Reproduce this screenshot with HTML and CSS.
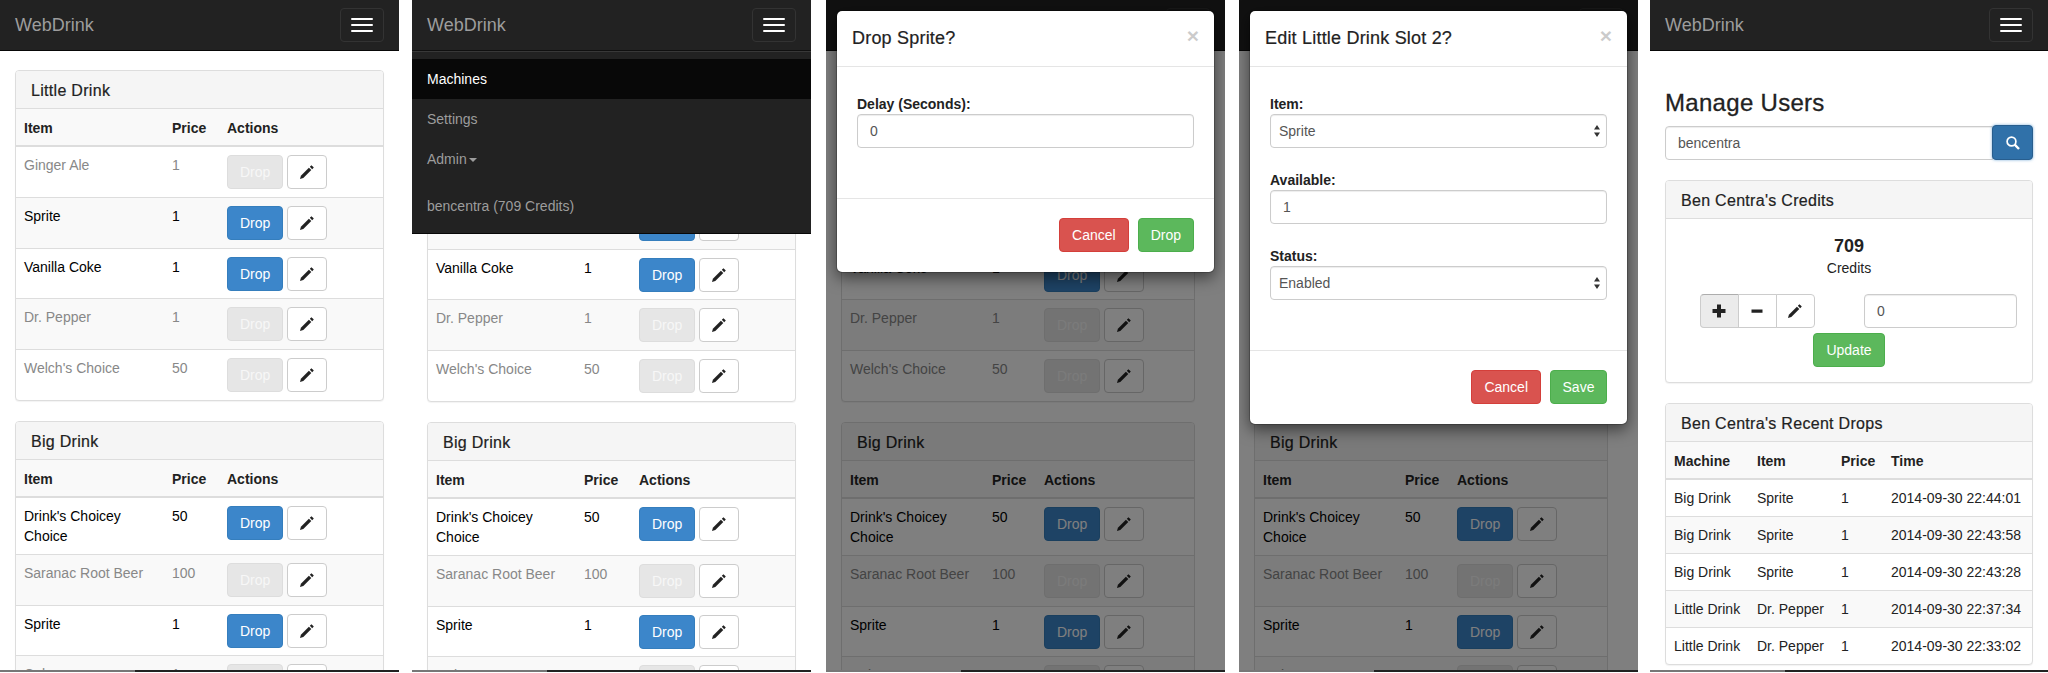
FILE: index.html
```html
<!DOCTYPE html>
<html>
<head lang="en">
    <meta charset="UTF-8">
    <title>WebDrink</title>
    <link rel="stylesheet" href="styles.css">
</head>
<body>
<svg class="sprite">
    <symbol id="pencil" viewBox="0 0 14 14">
        <path d="M0 14 .9 10.7 8.9 2.7 11.3 5.1 3.3 13.1Z"/>
        <path d="M9.8 1.8 11.2 .4Q11.4 .2 11.7 .4L13.6 2.3Q13.8 2.6 13.6 2.8L12.2 4.2Z"/>
    </symbol>
    <symbol id="plus" viewBox="0 0 14 14">
        <path d="M5 .5h4v4.5h4.5v4H9v4.5H5V9H.5V5H5z"/>
    </symbol>
    <symbol id="minus" viewBox="0 0 14 14">
        <path d="M1.5 5.5h11v3.2h-11z"/>
    </symbol>
    <symbol id="search" viewBox="0 0 14 14">
        <circle cx="5.5" cy="5.5" r="4.4" fill="none" stroke="currentColor" stroke-width="1.7"/>
        <path d="M8.7 8.7 13 13" fill="none" stroke="currentColor" stroke-width="2.4"/>
    </symbol>
    <symbol id="updown" viewBox="0 0 6 12">
        <path d="M3 0 6 4.6H0ZM0 7.4H6L3 12Z"/>
    </symbol>
</svg>

<div class="phones">

    <!-- machines list -->
    <div class="phone">
        <div class="screen">
            <div class="navbar">
                <a class="brand">WebDrink</a>
                <button class="toggle"><i></i><i></i><i></i></button>
            </div>
            <div class="content">
                <div class="panel">
                    <div class="panel-heading">Little Drink</div>
                    <table class="table drinks">
                        <thead><tr><th class="c-item">Item</th><th class="c-price">Price</th><th>Actions</th></tr></thead>
                        <tbody>
                        <tr class="muted"><td>Ginger Ale</td><td>1</td><td><div class="actions"><button class="btn btn-off">Drop</button><button class="btn btn-edit"><svg class="icon"><use href="#pencil"/></svg></button></div></td></tr>
                        <tr class="alt"><td>Sprite</td><td>1</td><td><div class="actions"><button class="btn btn-blue">Drop</button><button class="btn btn-edit"><svg class="icon"><use href="#pencil"/></svg></button></div></td></tr>
                        <tr><td>Vanilla Coke</td><td>1</td><td><div class="actions"><button class="btn btn-blue">Drop</button><button class="btn btn-edit"><svg class="icon"><use href="#pencil"/></svg></button></div></td></tr>
                        <tr class="muted alt"><td>Dr. Pepper</td><td>1</td><td><div class="actions"><button class="btn btn-off">Drop</button><button class="btn btn-edit"><svg class="icon"><use href="#pencil"/></svg></button></div></td></tr>
                        <tr class="muted"><td>Welch's Choice</td><td>50</td><td><div class="actions"><button class="btn btn-off">Drop</button><button class="btn btn-edit"><svg class="icon"><use href="#pencil"/></svg></button></div></td></tr>
                        </tbody>
                    </table>
                </div>
                <div class="panel">
                    <div class="panel-heading">Big Drink</div>
                    <table class="table drinks">
                        <thead><tr><th class="c-item">Item</th><th class="c-price">Price</th><th>Actions</th></tr></thead>
                        <tbody>
                        <tr><td>Drink's Choicey Choice</td><td>50</td><td><div class="actions"><button class="btn btn-blue">Drop</button><button class="btn btn-edit"><svg class="icon"><use href="#pencil"/></svg></button></div></td></tr>
                        <tr class="muted alt"><td>Saranac Root Beer</td><td>100</td><td><div class="actions"><button class="btn btn-off">Drop</button><button class="btn btn-edit"><svg class="icon"><use href="#pencil"/></svg></button></div></td></tr>
                        <tr><td>Sprite</td><td>1</td><td><div class="actions"><button class="btn btn-blue">Drop</button><button class="btn btn-edit"><svg class="icon"><use href="#pencil"/></svg></button></div></td></tr>
                        <tr class="muted alt"><td>Cola</td><td>1</td><td><div class="actions"><button class="btn btn-off">Drop</button><button class="btn btn-edit"><svg class="icon"><use href="#pencil"/></svg></button></div></td></tr>
                        </tbody>
                    </table>
                </div>
            </div>
        </div>
        <div class="edge"></div>
    </div>

    <!-- menu open -->
    <div class="phone phone-2">
        <div class="screen">
            <div class="navbar navbar-open">
                <div class="navbar-top">
                    <a class="brand">WebDrink</a>
                    <button class="toggle"><i></i><i></i><i></i></button>
                </div>
                <div class="menu">
                    <ul class="nav nav-main">
                        <li class="active">Machines</li>
                        <li>Settings</li>
                        <li>Admin<span class="caret"></span></li>
                    </ul>
                    <ul class="nav">
                        <li>bencentra (709 Credits)</li>
                    </ul>
                </div>
            </div>
            <div class="content content-under">
                <div class="panel">
                    <div class="panel-heading">Little Drink</div>
                    <table class="table drinks">
                        <thead><tr><th class="c-item">Item</th><th class="c-price">Price</th><th>Actions</th></tr></thead>
                        <tbody>
                        <tr class="muted"><td>Ginger Ale</td><td>1</td><td><div class="actions"><button class="btn btn-off">Drop</button><button class="btn btn-edit"><svg class="icon"><use href="#pencil"/></svg></button></div></td></tr>
                        <tr class="alt"><td>Sprite</td><td>1</td><td><div class="actions"><button class="btn btn-blue">Drop</button><button class="btn btn-edit"><svg class="icon"><use href="#pencil"/></svg></button></div></td></tr>
                        <tr><td>Vanilla Coke</td><td>1</td><td><div class="actions"><button class="btn btn-blue">Drop</button><button class="btn btn-edit"><svg class="icon"><use href="#pencil"/></svg></button></div></td></tr>
                        <tr class="muted alt"><td>Dr. Pepper</td><td>1</td><td><div class="actions"><button class="btn btn-off">Drop</button><button class="btn btn-edit"><svg class="icon"><use href="#pencil"/></svg></button></div></td></tr>
                        <tr class="muted"><td>Welch's Choice</td><td>50</td><td><div class="actions"><button class="btn btn-off">Drop</button><button class="btn btn-edit"><svg class="icon"><use href="#pencil"/></svg></button></div></td></tr>
                        </tbody>
                    </table>
                </div>
                <div class="panel">
                    <div class="panel-heading">Big Drink</div>
                    <table class="table drinks">
                        <thead><tr><th class="c-item">Item</th><th class="c-price">Price</th><th>Actions</th></tr></thead>
                        <tbody>
                        <tr><td>Drink's Choicey Choice</td><td>50</td><td><div class="actions"><button class="btn btn-blue">Drop</button><button class="btn btn-edit"><svg class="icon"><use href="#pencil"/></svg></button></div></td></tr>
                        <tr class="muted alt"><td>Saranac Root Beer</td><td>100</td><td><div class="actions"><button class="btn btn-off">Drop</button><button class="btn btn-edit"><svg class="icon"><use href="#pencil"/></svg></button></div></td></tr>
                        <tr><td>Sprite</td><td>1</td><td><div class="actions"><button class="btn btn-blue">Drop</button><button class="btn btn-edit"><svg class="icon"><use href="#pencil"/></svg></button></div></td></tr>
                        <tr class="muted alt"><td>Cola</td><td>1</td><td><div class="actions"><button class="btn btn-off">Drop</button><button class="btn btn-edit"><svg class="icon"><use href="#pencil"/></svg></button></div></td></tr>
                        </tbody>
                    </table>
                </div>
            </div>
        </div>
        <div class="edge"></div>
    </div>

    <!-- drop dialog -->
    <div class="phone phone-3">
        <div class="screen screen-modal">
            <div class="navbar">
                <a class="brand">WebDrink</a>
                <button class="toggle"><i></i><i></i><i></i></button>
            </div>
            <div class="content">
                <div class="panel">
                    <div class="panel-heading">Little Drink</div>
                    <table class="table drinks">
                        <thead><tr><th class="c-item">Item</th><th class="c-price">Price</th><th>Actions</th></tr></thead>
                        <tbody>
                        <tr class="muted"><td>Ginger Ale</td><td>1</td><td><div class="actions"><button class="btn btn-off">Drop</button><button class="btn btn-edit"><svg class="icon"><use href="#pencil"/></svg></button></div></td></tr>
                        <tr class="alt"><td>Sprite</td><td>1</td><td><div class="actions"><button class="btn btn-blue">Drop</button><button class="btn btn-edit"><svg class="icon"><use href="#pencil"/></svg></button></div></td></tr>
                        <tr><td>Vanilla Coke</td><td>1</td><td><div class="actions"><button class="btn btn-blue">Drop</button><button class="btn btn-edit"><svg class="icon"><use href="#pencil"/></svg></button></div></td></tr>
                        <tr class="muted alt"><td>Dr. Pepper</td><td>1</td><td><div class="actions"><button class="btn btn-off">Drop</button><button class="btn btn-edit"><svg class="icon"><use href="#pencil"/></svg></button></div></td></tr>
                        <tr class="muted"><td>Welch's Choice</td><td>50</td><td><div class="actions"><button class="btn btn-off">Drop</button><button class="btn btn-edit"><svg class="icon"><use href="#pencil"/></svg></button></div></td></tr>
                        </tbody>
                    </table>
                </div>
                <div class="panel">
                    <div class="panel-heading">Big Drink</div>
                    <table class="table drinks">
                        <thead><tr><th class="c-item">Item</th><th class="c-price">Price</th><th>Actions</th></tr></thead>
                        <tbody>
                        <tr><td>Drink's Choicey Choice</td><td>50</td><td><div class="actions"><button class="btn btn-blue">Drop</button><button class="btn btn-edit"><svg class="icon"><use href="#pencil"/></svg></button></div></td></tr>
                        <tr class="muted alt"><td>Saranac Root Beer</td><td>100</td><td><div class="actions"><button class="btn btn-off">Drop</button><button class="btn btn-edit"><svg class="icon"><use href="#pencil"/></svg></button></div></td></tr>
                        <tr><td>Sprite</td><td>1</td><td><div class="actions"><button class="btn btn-blue">Drop</button><button class="btn btn-edit"><svg class="icon"><use href="#pencil"/></svg></button></div></td></tr>
                        <tr class="muted alt"><td>Cola</td><td>1</td><td><div class="actions"><button class="btn btn-off">Drop</button><button class="btn btn-edit"><svg class="icon"><use href="#pencil"/></svg></button></div></td></tr>
                        </tbody>
                    </table>
                </div>
            </div>
            <div class="backdrop"></div>
            <div class="modal">
                <div class="modal-header">
                    <h4>Drop Sprite?</h4>
                    <span class="close">&times;</span>
                </div>
                <div class="modal-body">
                    <div class="form-group">
                        <label>Delay (Seconds):</label>
                        <input class="form-control" type="text" value="0">
                    </div>
                </div>
                <div class="modal-footer">
                    <button class="btn btn-red">Cancel</button>
                    <button class="btn btn-green">Drop</button>
                </div>
            </div>
        </div>
        <div class="edge"></div>
    </div>

    <!-- edit dialog -->
    <div class="phone phone-4">
        <div class="screen screen-modal">
            <div class="navbar">
                <a class="brand">WebDrink</a>
                <button class="toggle"><i></i><i></i><i></i></button>
            </div>
            <div class="content">
                <div class="panel">
                    <div class="panel-heading">Little Drink</div>
                    <table class="table drinks">
                        <thead><tr><th class="c-item">Item</th><th class="c-price">Price</th><th>Actions</th></tr></thead>
                        <tbody>
                        <tr class="muted"><td>Ginger Ale</td><td>1</td><td><div class="actions"><button class="btn btn-off">Drop</button><button class="btn btn-edit"><svg class="icon"><use href="#pencil"/></svg></button></div></td></tr>
                        <tr class="alt"><td>Sprite</td><td>1</td><td><div class="actions"><button class="btn btn-blue">Drop</button><button class="btn btn-edit"><svg class="icon"><use href="#pencil"/></svg></button></div></td></tr>
                        <tr><td>Vanilla Coke</td><td>1</td><td><div class="actions"><button class="btn btn-blue">Drop</button><button class="btn btn-edit"><svg class="icon"><use href="#pencil"/></svg></button></div></td></tr>
                        <tr class="muted alt"><td>Dr. Pepper</td><td>1</td><td><div class="actions"><button class="btn btn-off">Drop</button><button class="btn btn-edit"><svg class="icon"><use href="#pencil"/></svg></button></div></td></tr>
                        <tr class="muted"><td>Welch's Choice</td><td>50</td><td><div class="actions"><button class="btn btn-off">Drop</button><button class="btn btn-edit"><svg class="icon"><use href="#pencil"/></svg></button></div></td></tr>
                        </tbody>
                    </table>
                </div>
                <div class="panel">
                    <div class="panel-heading">Big Drink</div>
                    <table class="table drinks">
                        <thead><tr><th class="c-item">Item</th><th class="c-price">Price</th><th>Actions</th></tr></thead>
                        <tbody>
                        <tr><td>Drink's Choicey Choice</td><td>50</td><td><div class="actions"><button class="btn btn-blue">Drop</button><button class="btn btn-edit"><svg class="icon"><use href="#pencil"/></svg></button></div></td></tr>
                        <tr class="muted alt"><td>Saranac Root Beer</td><td>100</td><td><div class="actions"><button class="btn btn-off">Drop</button><button class="btn btn-edit"><svg class="icon"><use href="#pencil"/></svg></button></div></td></tr>
                        <tr><td>Sprite</td><td>1</td><td><div class="actions"><button class="btn btn-blue">Drop</button><button class="btn btn-edit"><svg class="icon"><use href="#pencil"/></svg></button></div></td></tr>
                        <tr class="muted alt"><td>Cola</td><td>1</td><td><div class="actions"><button class="btn btn-off">Drop</button><button class="btn btn-edit"><svg class="icon"><use href="#pencil"/></svg></button></div></td></tr>
                        </tbody>
                    </table>
                </div>
            </div>
            <div class="backdrop"></div>
            <div class="modal">
                <div class="modal-header">
                    <h4>Edit Little Drink Slot 2?</h4>
                    <span class="close">&times;</span>
                </div>
                <div class="modal-body">
                    <div class="form-group">
                        <label>Item:</label>
                        <div class="select-wrap">
                            <select class="form-control"><option>Sprite</option></select>
                            <svg class="updown"><use href="#updown"/></svg>
                        </div>
                    </div>
                    <div class="form-group">
                        <label>Available:</label>
                        <input class="form-control" type="text" value="1">
                    </div>
                    <div class="form-group">
                        <label>Status:</label>
                        <div class="select-wrap">
                            <select class="form-control"><option>Enabled</option></select>
                            <svg class="updown"><use href="#updown"/></svg>
                        </div>
                    </div>
                </div>
                <div class="modal-footer">
                    <button class="btn btn-red">Cancel</button>
                    <button class="btn btn-green btn-save">Save</button>
                </div>
            </div>
        </div>
        <div class="edge"></div>
    </div>

    <!-- manage users -->
    <div class="phone phone-5">
        <div class="screen">
            <div class="navbar">
                <a class="brand">WebDrink</a>
                <button class="toggle"><i></i><i></i><i></i></button>
            </div>
            <div class="content">
                <h3 class="page-title">Manage Users</h3>
                <div class="search">
                    <input class="form-control" type="text" value="bencentra">
                    <button class="btn btn-search"><svg class="icon"><use href="#search"/></svg></button>
                </div>
                <div class="panel">
                    <div class="panel-heading">Ben Centra's Credits</div>
                    <div class="panel-body">
                        <div class="credits-num">709</div>
                        <div class="credits-label">Credits</div>
                        <div class="credits-row">
                            <div class="btn-group">
                                <button class="btn btn-edit on"><svg class="icon"><use href="#plus"/></svg></button>
                                <button class="btn btn-edit"><svg class="icon"><use href="#minus"/></svg></button>
                                <button class="btn btn-edit"><svg class="icon"><use href="#pencil"/></svg></button>
                            </div>
                            <input class="form-control" type="text" value="0">
                        </div>
                        <button class="btn btn-green btn-update">Update</button>
                    </div>
                </div>
                <div class="panel">
                    <div class="panel-heading">Ben Centra's Recent Drops</div>
                    <table class="table drops">
                        <thead><tr><th class="c-machine">Machine</th><th class="c-what">Item</th><th class="c-cost">Price</th><th>Time</th></tr></thead>
                        <tbody>
                        <tr><td>Big Drink</td><td>Sprite</td><td>1</td><td>2014-09-30 22:44:01</td></tr>
                        <tr class="alt"><td>Big Drink</td><td>Sprite</td><td>1</td><td>2014-09-30 22:43:58</td></tr>
                        <tr><td>Big Drink</td><td>Sprite</td><td>1</td><td>2014-09-30 22:43:28</td></tr>
                        <tr class="alt"><td>Little Drink</td><td>Dr. Pepper</td><td>1</td><td>2014-09-30 22:37:34</td></tr>
                        <tr><td>Little Drink</td><td>Dr. Pepper</td><td>1</td><td>2014-09-30 22:33:02</td></tr>
                        </tbody>
                    </table>
                </div>
            </div>
        </div>
        <div class="edge"></div>
    </div>

</div>
</body>
</html>
```

FILE: styles.css
```css
* {
    box-sizing: border-box;
}

html, body {
    margin: 0;
    padding: 0;
    height: 673px;
    overflow: hidden;
    background: #fff;
}

body {
    font-family: "Liberation Sans", Arial, sans-serif;
    font-size: 14px;
    line-height: 20px;
    color: #222;
}

.sprite {
    display: none;
}

.phones {
    display: flex;
    align-items: flex-start;
}

.phone {
    flex: none;
    width: 399px;
}

.phone-2 {
    margin-left: 13px;
}

.phone-3 {
    margin-left: 15px;
}

.phone-4 {
    margin-left: 14px;
}

.phone-5 {
    margin-left: 12px;
    width: 398px;
}

.screen {
    position: relative;
    height: 670px;
    overflow: hidden;
    background: #fff;
}

.edge {
    height: 2px;
    background: linear-gradient(90deg, #777 135px, #222 135px);
}

/* navbar */
.navbar {
    display: flex;
    align-items: center;
    justify-content: space-between;
    height: 51px;
    padding: 0 15px;
    background: #222;
    border-bottom: 1px solid #080808;
}

.brand {
    font-size: 18px;
    color: #9d9d9d;
}

.toggle {
    display: block;
    width: 44px;
    height: 34px;
    padding: 9px 10px;
    background: none;
    border: 1px solid #333;
    border-radius: 4px;
}

.toggle i {
    display: block;
    width: 22px;
    height: 2px;
    background: #fff;
    border-radius: 1px;
}

.toggle i + i {
    margin-top: 4px;
}

.navbar-open {
    display: block;
    position: absolute;
    top: 0;
    left: 0;
    right: 0;
    height: auto;
    padding: 0;
    z-index: 2;
}

.navbar-top {
    display: flex;
    align-items: center;
    justify-content: space-between;
    height: 50px;
    padding: 0 15px;
}

.menu {
    border-top: 1px solid #101010;
    box-shadow: inset 0 1px 0 rgba(255, 255, 255, .1);
}

.nav {
    list-style: none;
    margin: 7px 0;
    padding: 0;
}

.nav-main {
    margin-top: 8px;
}

.nav li {
    padding: 10px 15px;
    color: #9d9d9d;
}

.nav li.active {
    background: #080808;
    color: #fff;
}

.caret {
    display: inline-block;
    margin-left: 2px;
    vertical-align: middle;
    border-top: 4px solid #9d9d9d;
    border-left: 4px solid transparent;
    border-right: 4px solid transparent;
}

/* page */
.content {
    padding: 19px 15px 0;
}

.content-under {
    padding-top: 71px;
}

.screen-modal .content {
    padding: 20px 30px 0 15px;
}

.panel {
    margin-bottom: 20px;
    background: #fff;
    border: 1px solid #ddd;
    border-radius: 4px;
    box-shadow: 0 1px 1px rgba(0, 0, 0, .05);
    overflow: hidden;
}

.panel-heading {
    padding: 11px 15px 9px;
    font-size: 16px;
    line-height: 17px;
    letter-spacing: .3px;
    -webkit-text-stroke: .2px;
    color: #222;
    background: #f5f5f5;
    border-bottom: 1px solid #ddd;
}

.panel-body {
    padding: 14px 15px 15px;
    text-align: center;
}

.table {
    width: 100%;
    table-layout: fixed;
    border-collapse: collapse;
    color: #000;
}

.table th {
    padding: 9px 8px 7px;
    text-align: left;
    color: #222;
    background: #f9f9f9;
    border-bottom: 2px solid #ddd;
}

.table td {
    padding: 8px;
    vertical-align: top;
    border-top: 1px solid #ddd;
}

.drinks td {
    padding-bottom: 7.8px;
}

.table tr.alt td {
    background: #f9f9f9;
}

.table tr.muted td {
    color: #888;
}

.drops {
    color: #222;
}

.c-item {
    width: 148px;
}

.c-price {
    width: 55px;
}

.screen-modal .c-item {
    width: 142px;
}

.screen-modal .c-price {
    width: 52px;
}

.c-machine {
    width: 83px;
}

.c-what {
    width: 84px;
}

.c-cost {
    width: 50px;
}

.actions {
    display: flex;
    gap: 4px;
}

/* buttons */
.btn {
    display: inline-block;
    height: 34px;
    padding: 6px 12px;
    font-family: inherit;
    font-size: 14px;
    line-height: 20px;
    white-space: nowrap;
    border: 1px solid transparent;
    border-radius: 4px;
}

.btn-blue {
    color: #fff;
    background: #3c86ca;
    border-color: #357ebd;
}

.btn-off {
    color: #f7f7f7;
    background: #e6e6e6;
    border-color: #ddd;
}

.btn-edit {
    width: 40px;
    padding: 0;
    color: #222;
    background: #fff;
    border-color: #ccc;
}

.btn-red {
    color: #fff;
    background: #d9534f;
    border-color: #d43f3a;
}

.btn-green {
    color: #fff;
    background: #5cb85c;
    border-color: #4cae4c;
}

.btn-save {
    width: 57px;
    padding: 6px 0;
}

.icon {
    display: block;
    width: 14px;
    height: 14px;
    margin: 0 auto;
    fill: currentColor;
}

/* forms */
.form-control {
    display: block;
    width: 100%;
    height: 34px;
    padding: 6px 12px;
    font-family: inherit;
    font-size: 14px;
    line-height: 20px;
    color: #555;
    background: #fff;
    border: 1px solid #ccc;
    border-radius: 4px;
    box-shadow: inset 0 1px 1px rgba(0, 0, 0, .075);
    outline: none;
}

select.form-control {
    padding-left: 8px;
    appearance: none;
    -webkit-appearance: none;
}

.select-wrap {
    position: relative;
}

.updown {
    position: absolute;
    top: 11px;
    right: 7px;
    width: 6px;
    height: 12px;
    fill: #333;
}

/* modal */
.backdrop {
    position: absolute;
    top: 0;
    left: 0;
    right: 0;
    bottom: 0;
    background: rgba(0, 0, 0, .5);
}

.modal {
    position: absolute;
    top: 10px;
    left: 10px;
    right: 10px;
    background: #fff;
    background-clip: padding-box;
    border: 1px solid rgba(0, 0, 0, .2);
    border-radius: 6px;
    box-shadow: 0 5px 15px rgba(0, 0, 0, .5);
}

.modal-header {
    display: flex;
    justify-content: space-between;
    padding: 15px;
    border-bottom: 1px solid #e5e5e5;
}

.modal-header h4 {
    margin: 0;
    font-size: 18px;
    font-weight: normal;
    line-height: 25px;
    letter-spacing: .2px;
    -webkit-text-stroke: .2px;
    color: #222;
}

.close {
    font-size: 21px;
    font-weight: bold;
    line-height: 20px;
    color: #000;
    opacity: .2;
}

.modal-body {
    padding: 20px 20px 35px;
}

.form-group {
    padding-top: 7px;
    margin-bottom: 15px;
}

.form-group label {
    display: block;
    font-weight: bold;
}

.modal-footer {
    display: flex;
    justify-content: flex-end;
    gap: 9px;
    padding: 19px 20px 20px;
    border-top: 1px solid #e5e5e5;
}

/* manage users */
.page-title {
    margin: 20px 0 10px;
    font-size: 24px;
    font-weight: normal;
    line-height: 26px;
    letter-spacing: .3px;
    -webkit-text-stroke: .3px;
    color: #222;
}

.search {
    display: flex;
    margin-bottom: 20px;
}

.search .form-control {
    flex: 1;
    border-radius: 4px 0 0 4px;
}

.btn-search {
    flex: none;
    width: 41px;
    height: 35px;
    margin: -1px 0 -1px -1px;
    padding: 0;
    color: #fff;
    background: #3071a9;
    border-color: #285e8e;
    box-shadow: 0 0 3px rgba(66, 139, 202, .7);
}

.credits-num {
    font-size: 18px;
    font-weight: bold;
    line-height: 26px;
}

.credits-label {
    margin-top: -1px;
}

.credits-row {
    display: grid;
    grid-template-columns: 1fr 1fr;
    column-gap: 30px;
    margin-top: 16px;
    text-align: left;
}

.btn-group {
    display: flex;
    justify-content: center;
}

.btn-group .btn {
    width: 39px;
    border-radius: 0;
    margin-left: -1px;
}

.btn-group .btn:first-child {
    border-radius: 4px 0 0 4px;
}

.btn-group .btn:last-child {
    border-radius: 0 4px 4px 0;
}

.btn-group .on {
    background: #ebebeb;
    border-color: #adadad #ccc #ccc;
}

.btn-update {
    display: block;
    width: 72px;
    margin: 5px auto 0;
    padding: 6px 0;
}
```
